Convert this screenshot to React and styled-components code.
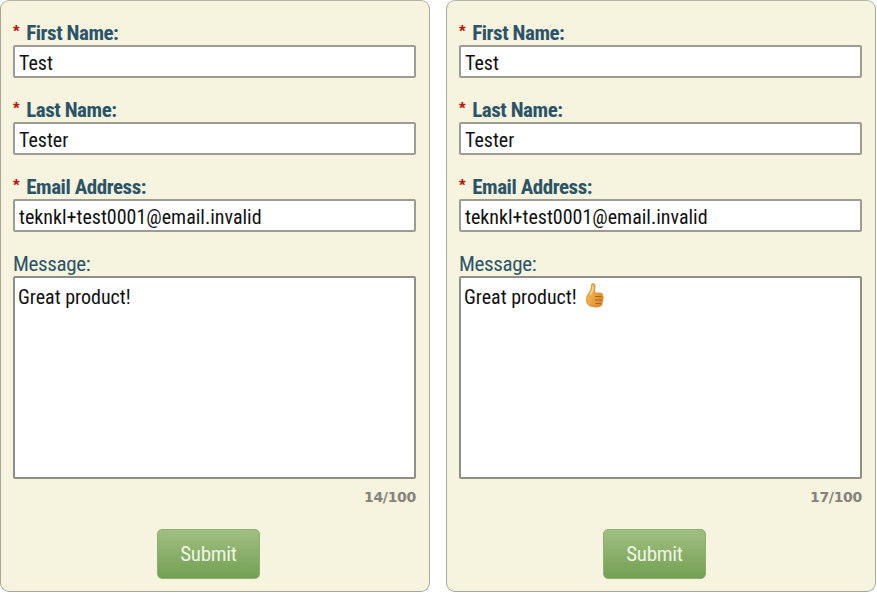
import styled, { createGlobalStyle } from "styled-components";

const Global = createGlobalStyle`
  html, body {
    margin: 0;
    padding: 0;
    background: #fff;
    overflow: hidden;
  }
`;

const Page = styled.div`
  display: flex;
  gap: 16px;
  width: 877px;
  height: 593px;
  box-sizing: border-box;
  font-family: Roboto, "Liberation Sans", Arial, sans-serif;
  font-stretch: 75%;
`;

const Card = styled.form`
  width: 430px;
  height: 592px;
  box-sizing: border-box;
  padding: 20px 12px 0;
  background: #f6f3df;
  border: 1px solid #a9a89c;
  border-top-color: #b5b4a6;
  border-radius: 9px;
  display: flex;
  flex-direction: column;
`;

const Field = styled.div`
  display: flex;
  flex-direction: column;
  margin-bottom: ${(props) => props.$gap || 0}px;
`;

const Label = styled.label`
  height: 24px;
  line-height: 24px;
  font-size: 21px;
  font-weight: ${(props) => (props.$required ? 700 : 400)};
  letter-spacing: ${(props) => (props.$required ? -0.45 : -0.35)}px;
  color: #2b5468;
  white-space: nowrap;
`;

const Star = styled.span`
  color: #b51a0c;
  font-family: "Liberation Sans", sans-serif;
  font-size: 17px;
  font-weight: 700;
  margin-right: 7px;
  position: relative;
  top: -3px;
`;

const Input = styled.input`
  box-sizing: border-box;
  width: 403px;
  height: 33px;
  padding: 2px 4px 0;
  border: 2px solid #9c9c94;
  border-radius: 2px;
  background: #fff;
  color: #111;
  font-family: inherit;
  font-stretch: inherit;
  font-size: 20px;
  outline: none;
`;

const AreaWrap = styled.div`
  position: relative;
  width: 403px;
  height: 203px;
`;

const Area = styled.textarea`
  display: block;
  box-sizing: border-box;
  width: 100%;
  height: 100%;
  padding: 7px 3px;
  border: 2px solid #8f8f88;
  border-radius: 2px;
  background: #fff;
  color: #111;
  font-family: inherit;
  font-stretch: inherit;
  font-size: 20px;
  line-height: 24px;
  resize: none;
  outline: none;
`;

const Emoji = styled.svg`
  position: absolute;
  left: 125px;
  top: 7px;
  width: 22px;
  height: 27px;
`;

const Counter = styled.div`
  height: 16px;
  line-height: 16px;
  margin-top: 10px;
  width: 403px;
  text-align: right;
  font-family: "DejaVu Sans", Arial, sans-serif;
  font-stretch: normal;
  font-size: 14px;
  font-weight: 700;
  letter-spacing: -0.3px;
  color: #85837b;
`;

const Actions = styled.div`
  display: flex;
  justify-content: center;
  width: 391px;
  margin-top: 24px;
`;

const Submit = styled.button`
  width: 103px;
  height: 50px;
  border: 1px solid #8fae73;
  border-radius: 5px;
  background: linear-gradient(#a0bf82, #73a052);
  color: #eef4e2;
  font-family: inherit;
  font-stretch: inherit;
  font-size: 21px;
  letter-spacing: -0.3px;
  cursor: pointer;
`;

function ThumbsUp() {
  return (
    <Emoji viewBox="0 0 22 27" aria-hidden="true">
      <defs>
        <linearGradient id="thumbFill" x1="0" y1="0" x2="1" y2="0.6">
          <stop offset="0" stopColor="#f8c560" />
          <stop offset="1" stopColor="#e08a2c" />
        </linearGradient>
      </defs>
      <path
        d="M8 .8c2-.6 3.200.5 3.100 2.600-.1 2.500-.7 4.600-.5 6.600h5.600c1.900 0 2.700 1.300 2.400 2.800.9 1 .9 2.500.1 3.400.6 1.200.3 2.500-.6 3.200.4 1.500-.1 3-1.500 3.700-1.700 1-5.500 1.200-8 .6C5 23 3.300 21.500 2.800 19c-.5-2.300-.4-5 .8-7 1.500-2.300 3.500-4.800 3.800-8 .1-1.200-.2-2.500.6-3.200z"
        fill="url(#thumbFill)"
        stroke="#c98a30"
        strokeWidth="0.800"
      />
      <path
        d="M11 13.500h6.500M11 17h6.800M11.500 20.500h5.300"
        stroke="#a9651a"
        strokeWidth="1.100"
        fill="none"
      />
      <path
        d="M9 3.500c.5 2.500-1 5.500-3 8"
        stroke="#fde3a6"
        strokeWidth="1.100"
        fill="none"
      />
    </Emoji>
  );
}

function ContactForm({ message, count, emoji }) {
  return (
    <Card onSubmit={(e) => e.preventDefault()}>
      <Field $gap={20}>
        <Label $required>
          <Star>*</Star>First Name:
        </Label>
        <Input defaultValue="Test" />
      </Field>
      <Field $gap={20}>
        <Label $required>
          <Star>*</Star>Last Name:
        </Label>
        <Input defaultValue="Tester" />
      </Field>
      <Field $gap={20}>
        <Label $required>
          <Star>*</Star>Email Address:
        </Label>
        <Input defaultValue="teknkl+test0001@email.invalid" />
      </Field>
      <Field>
        <Label>Message:</Label>
        <AreaWrap>
          <Area defaultValue={message} />
          {emoji && <ThumbsUp />}
        </AreaWrap>
      </Field>
      <Counter>{count}/100</Counter>
      <Actions>
        <Submit type="submit">Submit</Submit>
      </Actions>
    </Card>
  );
}

export default function App() {
  return (
    <Page>
      <Global />
      <ContactForm message="Great product!" count={14} />
      <ContactForm message="Great product!" count={17} emoji />
    </Page>
  );
}
